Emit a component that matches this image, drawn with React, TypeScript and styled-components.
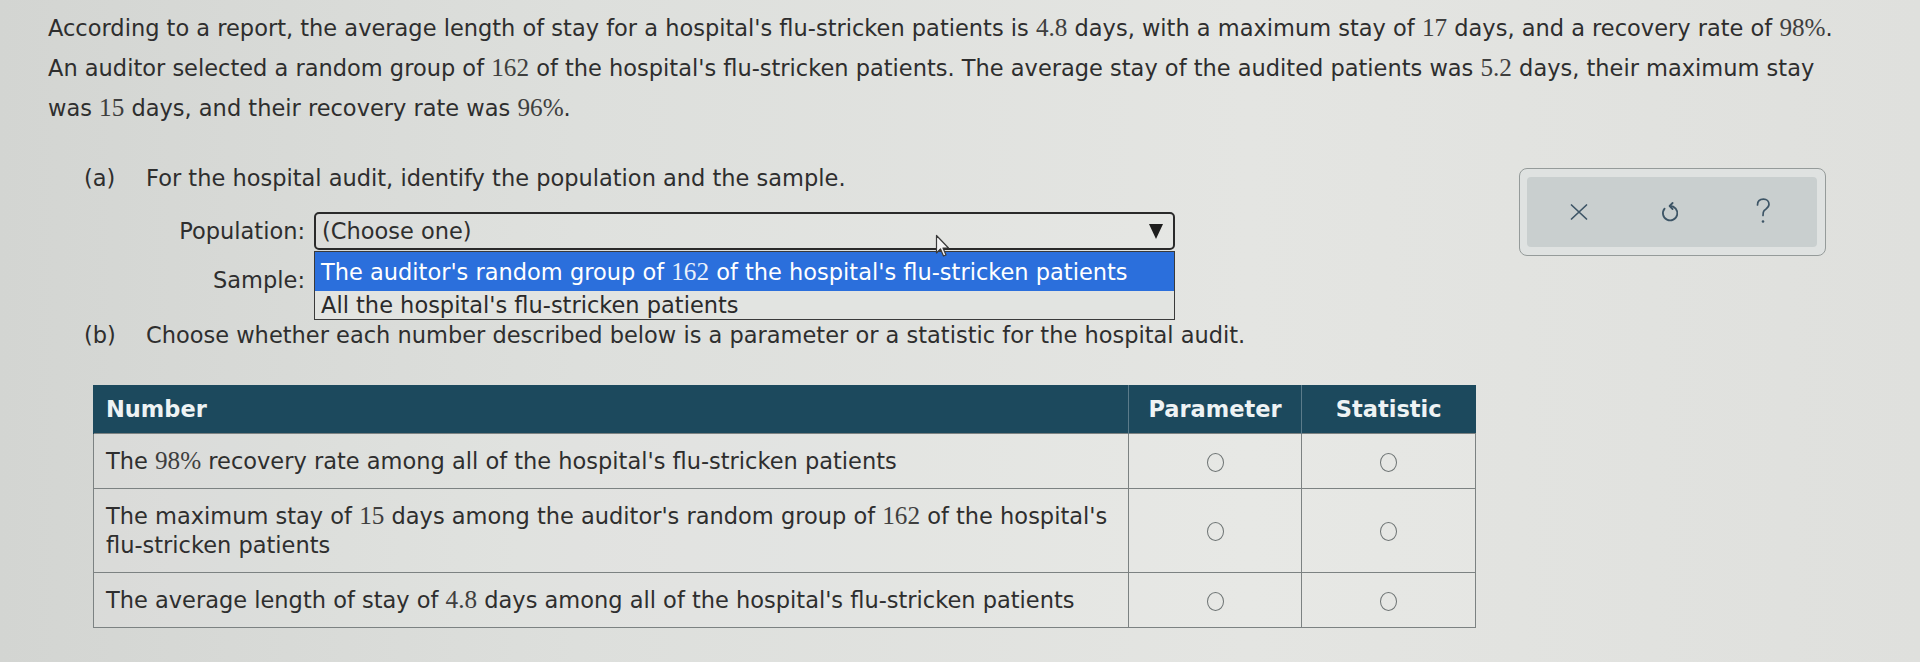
import React from "react";
import styled, { createGlobalStyle } from "styled-components";

const Global = createGlobalStyle`
  html, body { margin: 0; padding: 0; }
  body {
    background: linear-gradient(90deg, #d3d5d2 0%, #dddfdc 30%, #e4e5e2 65%, #dfe0dd 100%);
    font-family: "DejaVu Sans", Verdana, sans-serif;
    color: #2e2e2e;
  }
`;

const Page = styled.div`
  width: 1920px;
  height: 662px;
  box-sizing: border-box;
  padding: 8px 0 0 48px;
  overflow: hidden;
  position: relative;
`;

const Intro = styled.div`
  font-size: 22.5px;
  line-height: 39px;
  white-space: nowrap;
`;

const Line = styled.div`
  display: block;
`;

const Num = styled.span`
  font-family: "Liberation Serif", "Times New Roman", serif;
  font-size: 1.12em;
  color: inherit;
  opacity: 0.9;
`;

const MainRow = styled.div`
  display: flex;
  align-items: flex-start;
`;

const LeftCol = styled.div`
  flex: 0 0 1471px;
`;

const PartHead = styled.div<{ $mt: number }>`
  display: flex;
  margin: ${(p) => p.$mt}px 0 0 36px;
  font-size: 22.5px;
  line-height: 30px;
  white-space: nowrap;
`;

const PartTag = styled.span`
  width: 62px;
  flex: none;
`;

const FormGrid = styled.div`
  display: grid;
  grid-template-columns: 257px 861px;
  column-gap: 9px;
  row-gap: 11px;
  margin-top: 19px;
  align-items: center;
`;

const FieldLabel = styled.label`
  text-align: right;
  font-size: 22.5px;
`;

const SelectWrap = styled.div`
  position: relative;
`;

const SelectBox = styled.div`
  height: 38px;
  box-sizing: border-box;
  border: 2px solid #2a2a2a;
  border-radius: 5px;
  display: flex;
  align-items: center;
  justify-content: space-between;
  padding: 0 10px 0 6px;
  font-size: 22.5px;
  background: rgba(255, 255, 255, 0.08);
`;

const Arrow = styled.span`
  margin-left: auto;
  width: 0;
  height: 0;
  border-left: 7px solid transparent;
  border-right: 7px solid transparent;
  border-top: 15px solid #1e1e1e;
`;

const ListBox = styled.div`
  position: absolute;
  top: calc(100% + 1px);
  left: 0;
  right: 0;
  border: 1px solid #3a3a3a;
  background: #e2e4e1;
  z-index: 2;
`;

const Option = styled.div<{ $active?: boolean }>`
  height: ${(p) => (p.$active ? 39 : 28)}px;
  line-height: ${(p) => (p.$active ? 39 : 28)}px;
  padding-left: 6px;
  font-size: 22.5px;
  white-space: nowrap;
  background: ${(p) => (p.$active ? "#2b6fdc" : "transparent")};
  color: ${(p) => (p.$active ? "#ffffff" : "#2a2a2a")};
`;

const Cursor = styled.svg`
  position: absolute;
  left: 621px;
  top: 22px;
  z-index: 3;
`;

const Table = styled.table`
  margin: 35px 0 0 45px;
  width: 1383px;
  border-collapse: collapse;
  font-size: 22.5px;
  table-layout: fixed;
`;

const Th = styled.th<{ $align?: string }>`
  background: #1c495d;
  color: #eef3f4;
  font-weight: bold;
  height: 48px;
  padding: 0 12px;
  text-align: ${(p) => p.$align || "center"};
  border-left: 1px solid rgba(255, 255, 255, 0.28);
  &:first-child { border-left: 1px solid #1c495d; }
`;

const Td = styled.td<{ $center?: boolean }>`
  border: 1px solid #7c8282;
  padding: 12px 12px;
  line-height: 29px;
  text-align: ${(p) => (p.$center ? "center" : "left")};
  vertical-align: middle;
  background: rgba(255, 255, 255, 0.12);
`;

const Radio = styled.span`
  display: inline-block;
  width: 15px;
  height: 17px;
  border: 1.5px solid #6d7373;
  border-radius: 50%;
  vertical-align: middle;
`;

const Toolbar = styled.div`
  margin-top: 40px;
  width: 307px;
  height: 88px;
  box-sizing: border-box;
  border: 1px solid #959b9a;
  border-radius: 8px;
  background: #dfe2e1;
  padding: 8px 8px 8px 7px;
`;

const ToolInner = styled.div`
  height: 100%;
  border-radius: 4px;
  background: #c9cfcf;
  display: grid;
  grid-template-columns: 1fr 1fr 1fr;
  align-items: center;
  justify-items: center;
  padding: 0 8px 0 6px;
  box-sizing: border-box;
`;

const ToolIcon = styled.svg`
  display: block;
`;

const rows: { cells: React.ReactNode }[] = [
  {
    cells: (
      <>
        The <Num>98%</Num> recovery rate among all of the hospital's flu-stricken patients
      </>
    ),
  },
  {
    cells: (
      <>
        The maximum stay of <Num>15</Num> days among the auditor's random group of <Num>162</Num> of the hospital's
        <br />
        flu-stricken patients
      </>
    ),
  },
  {
    cells: (
      <>
        The average length of stay of <Num>4.8</Num> days among all of the hospital's flu-stricken patients
      </>
    ),
  },
];

export default function App() {
  return (
    <Page>
      <Global />
      <Intro>
        <Line>
          According to a report, the average length of stay for a hospital's flu-stricken patients is <Num>4.8</Num> days, with a maximum stay of <Num>17</Num> days, and a recovery rate of <Num>98%</Num>.
        </Line>
        <Line>
          An auditor selected a random group of <Num>162</Num> of the hospital's flu-stricken patients. The average stay of the audited patients was <Num>5.2</Num> days, their maximum stay
        </Line>
        <Line>
          was <Num>15</Num> days, and their recovery rate was <Num>96%</Num>.
        </Line>
      </Intro>
      <MainRow>
        <LeftCol>
          <PartHead $mt={35}>
            <PartTag>(a)</PartTag>
            <span>For the hospital audit, identify the population and the sample.</span>
          </PartHead>
          <FormGrid>
            <FieldLabel>Population:</FieldLabel>
            <SelectWrap>
              <SelectBox>
                <span>(Choose one)</span>
                <Arrow />
              </SelectBox>
              <ListBox>
                <Option $active>
                  The auditor's random group of <Num>162</Num> of the hospital's flu-stricken patients
                </Option>
                <Option>All the hospital's flu-stricken patients</Option>
              </ListBox>
              <Cursor width="16" height="24" viewBox="0 0 16 24">
                <path d="M1.5 1.5 L1.5 19 L5.5 15 L8.5 22 L11 21 L8 14 L13.5 14 Z" fill="#f4f4f4" stroke="#3a3a3a" strokeWidth="1.2" strokeLinejoin="round" />
              </Cursor>
            </SelectWrap>
            <FieldLabel>Sample:</FieldLabel>
            <SelectWrap>
              <SelectBox aria-label="Sample select">
                <Arrow />
              </SelectBox>
            </SelectWrap>
          </FormGrid>
          <PartHead $mt={21}>
            <PartTag>(b)</PartTag>
            <span>Choose whether each number described below is a parameter or a statistic for the hospital audit.</span>
          </PartHead>
          <Table>
            <colgroup>
              <col />
              <col style={{ width: 173 }} />
              <col style={{ width: 174 }} />
            </colgroup>
            <thead>
              <tr>
                <Th $align="left">Number</Th>
                <Th>Parameter</Th>
                <Th>Statistic</Th>
              </tr>
            </thead>
            <tbody>
              {rows.map((r, i) => (
                <tr key={i}>
                  <Td>{r.cells}</Td>
                  <Td $center>
                    <Radio />
                  </Td>
                  <Td $center>
                    <Radio />
                  </Td>
                </tr>
              ))}
            </tbody>
          </Table>
        </LeftCol>
        <Toolbar>
          <ToolInner>
            <ToolIcon width="22" height="22" viewBox="0 0 22 22">
              <path d="M3.5 4 L18.5 18 M18.5 4 L3.5 18" stroke="#3d5566" strokeWidth="1.7" strokeLinecap="round" />
            </ToolIcon>
            <ToolIcon width="24" height="26" viewBox="0 0 24 26">
              <path d="M11 7 A7.2 7.2 0 1 1 5.6 9.6" fill="none" stroke="#3d5566" strokeWidth="1.8" strokeLinecap="round" />
              <path d="M13.6 4 L10.6 7 L13.6 10" fill="none" stroke="#3d5566" strokeWidth="1.8" strokeLinecap="round" strokeLinejoin="round" />
            </ToolIcon>
            <ToolIcon width="22" height="32" viewBox="0 0 22 32">
              <path d="M5.5 9 C5.5 5 8.2 3.2 11.5 3.2 C14.8 3.2 17 5.4 17 8.3 C17 11.8 13.8 12.9 12.1 14.6 C11 15.7 11 17.3 11 19.5" fill="none" stroke="#3d5566" strokeWidth="1.7" strokeLinecap="round" />
              <circle cx="11" cy="25.5" r="1.3" fill="#3d5566" />
            </ToolIcon>
          </ToolInner>
        </Toolbar>
      </MainRow>
    </Page>
  );
}
